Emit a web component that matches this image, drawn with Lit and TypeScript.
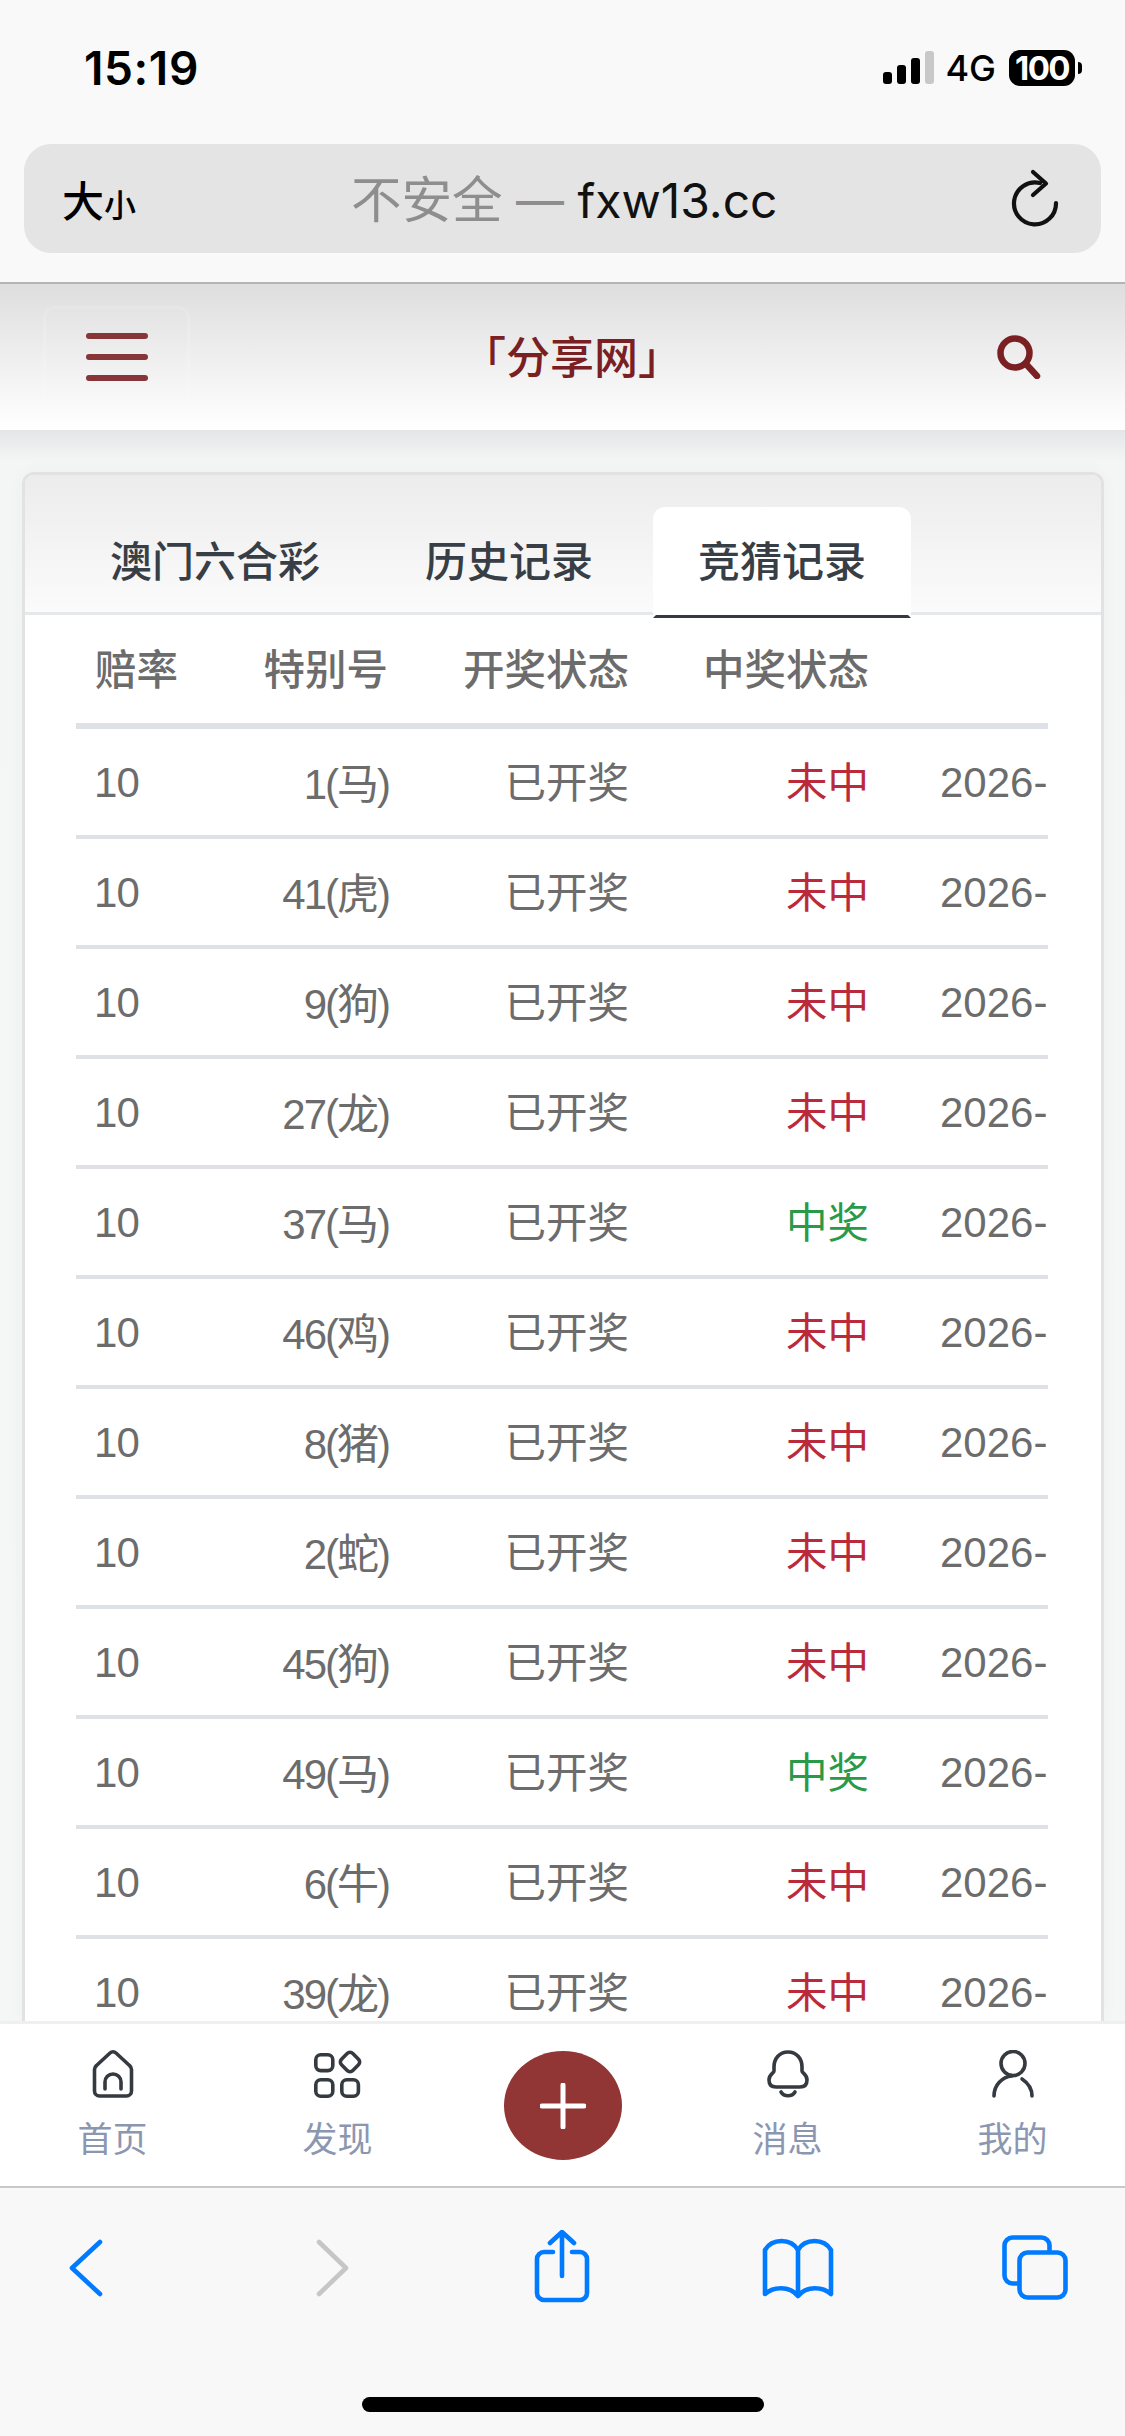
import { LitElement, html, css, svg } from "lit";
import { customElement } from "lit/decorators.js";

const rows: [string, boolean][] = [
  ["1(马)", false], ["41(虎)", false], ["9(狗)", false], ["27(龙)", false],
  ["37(马)", true], ["46(鸡)", false], ["8(猪)", false], ["2(蛇)", false],
  ["45(狗)", false], ["49(马)", true], ["6(牛)", false], ["39(龙)", false],
];

const navIcons = {
  home: svg`<path d="M21 3 a4.5 4.5 0 0 1 6 0 L40.5 15.5 a5.5 5.5 0 0 1 2 4 V41 a5 5 0 0 1 -5 5 H10.5 a5 5 0 0 1 -5 -5 V19.5 a5.5 5.5 0 0 1 2 -4 Z"/><path d="M16 39 V32 a8 8 0 0 1 16 0 V39"/>`,
  find: svg`<rect x="1.8" y="4.8" width="17" height="15.8" rx="5"/><rect x="1.8" y="29.8" width="17" height="16.4" rx="5"/><rect x="27.8" y="29.8" width="16.6" height="16.4" rx="5"/><rect x="28" y="4" width="16" height="16" rx="4" transform="rotate(45 36 12)"/>`,
  bell: svg`<path d="M24 2 C15 2 10 9 10 17 V21 C10 23 5 24 5 30 C5 35 8 37 12 37 H36 C40 37 43 35 43 30 C43 24 38 23 38 21 V17 C38 9 33 2 24 2 Z"/><path d="M17 42 C20 47 28 47 31 42"/>`,
  user: svg`<circle cx="24" cy="13.5" r="12"/><path d="M5 46 C5 35 13 27 23 26"/><path d="M33 29 C39 33 43 39 43 46"/>`,
};

@customElement("app-root")
export class AppRoot extends LitElement {
  static styles = css`
    :host {
      display: flex;
      flex-direction: column;
      width: 1125px;
      height: 2436px;
      overflow: hidden;
      font-family: "Liberation Sans", "Noto Sans CJK SC", sans-serif;
      background: #f4f5f5;
    }
    svg { display: block; fill: none; }
    .top { background: #f9f9f9; height: 282px; border-bottom: 2px solid #b4b4b4; flex: none; box-sizing: content-box; }
    .status {
      height: 136px; margin-bottom: 8px; padding: 0 43px 0 84px; box-sizing: border-box;
      display: flex; align-items: center; justify-content: space-between;
      font-family: Inter, "Noto Sans CJK SC", sans-serif; color: #000;
    }
    .time { font-size: 46px; font-weight: 600; letter-spacing: 0.6px; }
    .sys { display: flex; align-items: center; }
    .net { font-size: 36px; font-weight: 500; margin: 0 13px 0 10px; }
    .batt {
      width: 66px; height: 36px; border-radius: 11px; background: #000; color: #fff;
      font-size: 33px; font-weight: 700; letter-spacing: -1.6px;
      display: flex; align-items: center; justify-content: center;
    }
    .nub { width: 4px; height: 12px; margin-left: 3px; background: #000; border-radius: 0 4px 4px 0; }
    .url {
      margin: 0 24px; height: 109px; background: #e4e4e4; border-radius: 27px;
      display: flex; align-items: center; padding: 0 35px 0 38px; box-sizing: border-box;
      font-family: Inter, "Noto Sans CJK SC", sans-serif;
    }
    .aa { width: 289px; display: flex; align-items: baseline; color: #000; font-family: "Noto Sans CJK SC", sans-serif; font-weight: 500; }
    .aa b { font-size: 42px; font-weight: 500; }
    .aa i { font-style: normal; font-size: 32px; font-weight: 500; }
    .addr { flex: 1; font-size: 48px; color: #111; white-space: nowrap; padding-bottom: 6px; }
    .addr span { color: #8e8e8e; }
    .addr .cn { font-size: 50.5px; }
    .head {
      flex: none; height: 146px; box-sizing: border-box;
      background: linear-gradient(#dedede, #ffffff);
      display: grid; grid-template-columns: 419px auto 1fr; align-items: center;
      padding: 0 84px 0 43px;
    }
    .burger {
      width: 147px; height: 103px; box-sizing: border-box; border: 3px solid rgba(255,255,255,.14); border-radius: 12px;
      display: flex; flex-direction: column; justify-content: center; align-items: center; gap: 15.5px;
    }
    .burger span { width: 62px; height: 5.5px; border-radius: 3px; background: #863638; }
    .title { font-family: "Noto Sans CJK SC", sans-serif; font-size: 44px; font-weight: 500; color: #7a2022; padding-bottom: 4px; }
    .search { justify-self: end; }
    main {
      flex: 1; min-height: 0; overflow: hidden; box-sizing: border-box; padding: 42px 21px 0 22px;
      background: linear-gradient(#e4e5e6, #f4f6f6 32px, #f5f6f6);
    }
    .card {
      background: #fff; border: 3px solid #e2e2e2; border-bottom: 0; border-radius: 12px 12px 0 0;
      box-shadow: 0 0 18px rgba(0,0,0,.03); height: 100%; box-sizing: border-box; overflow: hidden;
    }
    .tabs {
      height: 140px; box-sizing: border-box; padding: 32px 0 0 40px;
      background: linear-gradient(#ececec, #fbfbfb); border-bottom: 3px solid #e6e9ec;
      display: flex; gap: 15px; align-items: flex-start;
      font-family: "Noto Sans CJK SC", sans-serif;
      font-size: 42px; font-weight: 500; color: #383e45;
    }
    .tab {
      height: 111px; box-sizing: border-box; padding: 0 42px 8px; border: 3px solid transparent; border-radius: 12px 12px 0 0;
      display: flex; align-items: center; justify-content: center;
    }
    .tab.on { background: #fff; border-bottom-color: #343a40; }
    .tbl { padding: 0 53px 0 51px; color: #6c6c6c; font-size: 42px; }
    .row {
      display: grid; grid-template-columns: 170px 162px 240px 240px 1fr; height: 110px; align-items: center;
      border-bottom: 4px solid #dee2e6; box-sizing: border-box;
    }
    .row.th { height: 114px; border-bottom-width: 6px; font-weight: 500; }
    .c { padding: 0 19px 0 0; text-align: right; white-space: nowrap; }
    .c.cn { padding-bottom: 4px; font-size: 41.5px; }
    .c.l { text-align: left; padding-left: 19px; }
    .c.l.n { padding-left: 18px; padding-top: 2px; letter-spacing: -0.8px; }
    .c.sp { padding-right: 20px; }
    .c.no { padding-bottom: 3px; letter-spacing: -2px; }
    .c.d { padding: 2px 0 0 52px; text-align: left; overflow: hidden; }
    .lose { color: #bb2a3a; }
    .win { color: #2a9a49; }
    nav {
      flex: none; height: 165px; box-sizing: border-box; background: #fff; border-top: 3px solid #efefef;
      display: grid; grid-template-columns: repeat(5, 225px);
      font-family: "Noto Sans CJK SC", sans-serif;
    }
    .item { display: flex; flex-direction: column; align-items: center; padding-top: 26px; color: #8b97b1; font-size: 35px; line-height: 50px; gap: 14px; }
    .item svg { stroke: #343a40; stroke-width: 3.6; stroke-linecap: round; stroke-linejoin: round; }
    .plusc { display: flex; justify-content: center; padding-top: 27px; }
    .plus { width: 118px; height: 109px; border-radius: 50%; background: #913535; display: flex; align-items: center; justify-content: center; }
    .bar {
      flex: none; height: 250px; box-sizing: border-box; background: #f8f8f8; border-top: 2px solid #c8c8c8;
      display: flex; flex-direction: column;
    }
    .tools { height: 209px; display: grid; grid-template-columns: 172px 320px 140px 332px 142px; }
    .tool { display: flex; justify-content: center; padding-top: 42px; }
    .tool svg { stroke: #007aff; stroke-width: 4.6; stroke-linecap: round; stroke-linejoin: round; }
    .tool svg.off { stroke: #c6c6c6; }
    .homebar { width: 402px; height: 15px; border-radius: 8px; background: #000; align-self: center; }
  `;

  private navItem(icon: unknown, label: string) {
    return html`<div class="item"><svg width="48" height="48" viewBox="0 0 48 48">${icon}</svg><span>${label}</span></div>`;
  }

  render() {
    return html`
      <div class="top">
        <div class="status">
          <span class="time">15:19</span>
          <div class="sys">
            <svg width="52" height="34" viewBox="0 0 52 34">
              <rect x="0" y="21" width="9" height="12" rx="3" fill="#000"/>
              <rect x="14" y="14" width="9" height="19" rx="3" fill="#000"/>
              <rect x="28" y="7" width="9" height="26" rx="3" fill="#000"/>
              <rect x="42" y="0" width="9" height="33" rx="3" fill="#c8c8c8"/>
            </svg>
            <span class="net">4G</span>
            <span class="batt">100</span><span class="nub"></span>
          </div>
        </div>
        <div class="url">
          <div class="aa"><b>大</b><i>小</i></div>
          <div class="addr"><span class="cn">不安全</span><span> — </span>fxw13.cc</div>
          <svg width="60" height="70" viewBox="0 0 60 70" stroke="#111" stroke-width="4.2" stroke-linecap="round" stroke-linejoin="round">
            <path d="M50 39 A21 21 0 1 1 34 19"/>
            <path d="M27 8 L40 19.5 L27 31"/>
          </svg>
        </div>
      </div>

      <header class="head">
        <div class="burger"><span></span><span></span><span></span></div>
        <div class="title">「分享网」</div>
        <svg class="search" width="44" height="44" viewBox="0 0 44 44" stroke="#7a2022" stroke-width="6.5" stroke-linecap="round">
          <circle cx="18" cy="18" r="14.5"/><path d="M29 29 L40 41"/>
        </svg>
      </header>

      <main>
        <section class="card">
          <div class="tabs">
            <div class="tab">澳门六合彩</div>
            <div class="tab">历史记录</div>
            <div class="tab on">竞猜记录</div>
          </div>
          <div class="tbl">
            <div class="row th">
              <div class="c l cn">赔率</div><div class="c cn sp">特别号</div><div class="c cn">开奖状态</div><div class="c cn">中奖状态</div><div></div>
            </div>
            ${rows.map(([n, win]) => html`
              <div class="row">
                <div class="c l n">10</div>
                <div class="c no">${n}</div>
                <div class="c cn">已开奖</div>
                <div class="c cn ${win ? "win" : "lose"}">${win ? "中奖" : "未中"}</div>
                <div class="c d">2026-</div>
              </div>`)}
          </div>
        </section>
      </main>

      <nav>
        ${this.navItem(navIcons.home, "首页")}
        ${this.navItem(navIcons.find, "发现")}
        <div class="plusc"><div class="plus">
          <svg width="46" height="46" viewBox="0 0 46 46" stroke="#fff" stroke-width="5" stroke-linecap="round"><path d="M23 2V44M2 23H44"/></svg>
        </div></div>
        ${this.navItem(navIcons.bell, "消息")}
        ${this.navItem(navIcons.user, "我的")}
      </nav>

      <div class="bar">
        <div class="tools">
          <div class="tool"><svg width="40" height="80" viewBox="0 0 40 80"><path d="M34 12 L6 38 L34 64"/></svg></div>
          <div class="tool"><svg class="off" width="40" height="80" viewBox="0 0 40 80"><path d="M7 12 L34 38 L7 64"/></svg></div>
          <div class="tool"><svg width="60" height="80" viewBox="0 0 60 80">
            <path d="M21 22 H12 a7 7 0 0 0 -7 7 V63 a7 7 0 0 0 7 7 H48 a7 7 0 0 0 7 -7 V29 a7 7 0 0 0 -7 -7 H40"/>
            <path d="M30 46 V2 M18 13 L30 2 L42 13"/>
          </svg></div>
          <div class="tool"><svg width="80" height="80" viewBox="0 0 80 80">
            <path d="M40 20 V66 M40 20 C33 8 14 8 7 20 V64 C15 57 31 55 40 66 C49 55 65 57 73 64 V20 C66 8 47 8 40 20 Z"/>
          </svg></div>
          <div class="tool"><svg width="80" height="80" viewBox="0 0 80 80">
            <path d="M22 53.5 H17.5 a8 8 0 0 1 -8 -8 V15.5 a8 8 0 0 1 8 -8 H46.5 a8 8 0 0 1 8 8 V21"/>
            <rect x="24.5" y="22.5" width="46" height="45" rx="8"/>
          </svg></div>
        </div>
        <div class="homebar"></div>
      </div>
    `;
  }
}
